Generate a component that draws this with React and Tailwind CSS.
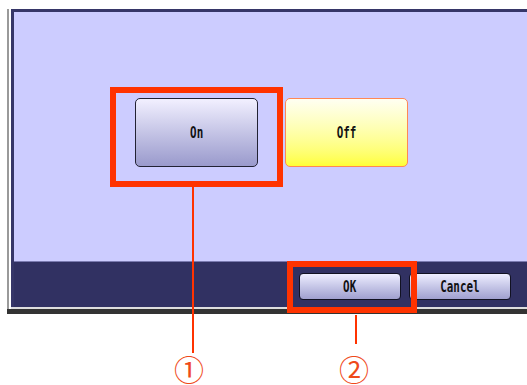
export default function App() {
  const btnFont = { fontFamily: '"DejaVu Sans Mono", "Liberation Mono", monospace' };
  const circFont = { fontFamily: '"Noto Sans CJK JP", sans-serif' };
  const label = "text-[16px] leading-[16px] font-bold text-[#111] scale-x-[0.68] inline-block";
  return (
    <div className="relative w-[527px] h-[385px] bg-white overflow-hidden">
      <div className="ml-[7px] mt-[9px] w-[520px]">
        <div className="flex h-[300px]">
          <div className="w-[2px] bg-[#9a9a9a]" />
          <div className="w-[2px] bg-white" />
          <div className="flex-1 flex flex-col">
            <div className="flex-1 flex flex-col border-l-[3px] border-t-[3px] border-[#363668]">
              <div className="h-[250px] bg-[#ccccff] border-b border-[#7a7ab0] pl-[121px] pt-[86px] flex gap-[27px] items-start">
                <div className="w-[123px] h-[69px] rounded-[5px] border-[1.5px] border-[#222233] bg-gradient-to-b from-[#f2f0ff] to-[#9a9acc] flex items-center justify-center">
                  <span style={btnFont} className={label}>On</span>
                </div>
                <div className="w-[123px] h-[69px] rounded-[5px] border-[1.5px] border-[#ff8855] bg-gradient-to-b from-[#fffff2] to-[#ffff33] flex items-center justify-center">
                  <span style={btnFont} className={label}>Off</span>
                </div>
              </div>
              <div className="h-[45px] bg-[#313162] flex justify-end items-start pr-[16px] pt-[11px] gap-[8px]">
                <div className="w-[102px] h-[27px] rounded-[4px] border-[1.5px] border-[#111122] bg-gradient-to-b from-[#eeeeff] to-[#a0a0cf] flex items-center justify-center">
                  <span style={btnFont} className={label}>OK</span>
                </div>
                <div className="w-[102px] h-[27px] rounded-[4px] border-[1.5px] border-[#111122] bg-gradient-to-b from-[#eeeeff] to-[#a0a0cf] flex items-center justify-center">
                  <span style={btnFont} className={label}>Cancel</span>
                </div>
              </div>
            </div>
            <div className="h-[2px] bg-[#dddddd]" />
          </div>
        </div>
        <div className="h-[5px] bg-[#333333]" />
      </div>

      {/* annotations */}
      <div className="absolute left-[110px] top-[87px] w-[173px] h-[100px] border-[6px] border-[#ff3300]" />
      <div className="absolute left-[192px] top-[187px] w-[2px] h-[166px] bg-[#ff3300]" />
      <div className="absolute left-[287px] top-[261px] w-[130px] h-[52px] border-[6px] border-[#ff3300]" />
      <div className="absolute left-[355px] top-[315px] w-[2px] h-[29px] bg-[#ff3300]" />
      <div style={circFont} className="absolute left-[169px] top-[353px] w-[40px] text-center text-[30px] leading-[30px] text-[#ef4a1a]">
        ①
      </div>
      <div style={circFont} className="absolute left-[334px] top-[353px] w-[40px] text-center text-[30px] leading-[30px] text-[#ef4a1a]">
        ②
      </div>
    </div>
  );
}
